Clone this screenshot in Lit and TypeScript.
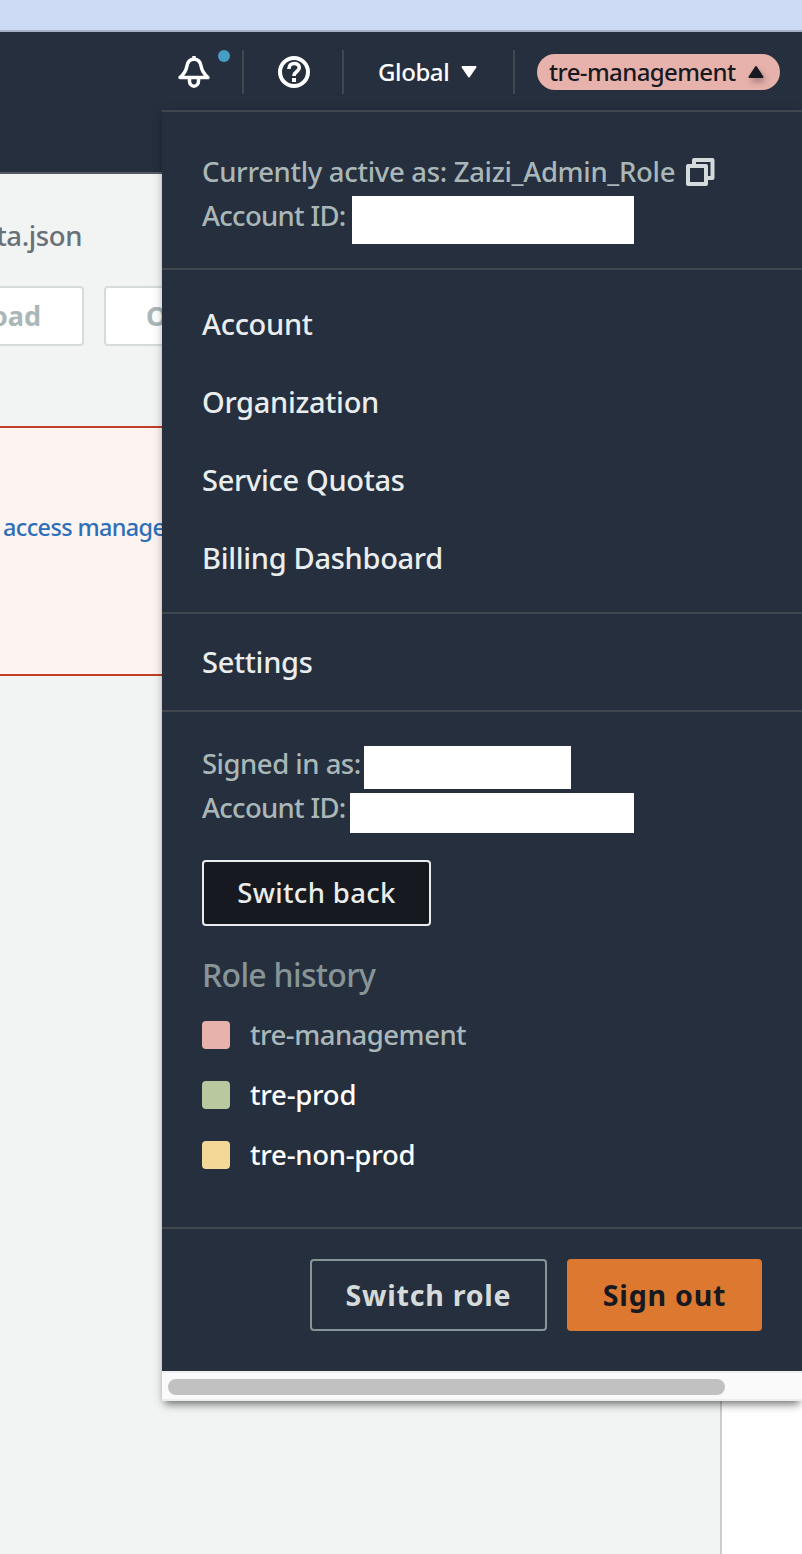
import { LitElement, html, css } from "lit";
import { customElement } from "lit/decorators.js";

@customElement("account-menu")
class AccountMenu extends LitElement {
  static styles = css`
    :host { display: block; box-sizing: border-box; color: #eaeded; }
    * { box-sizing: border-box; }
    .body { background: #252f3e; height: 1261px; border-top: 2px solid #41474f; }
    section { padding-left: 40px; border-bottom: 2px solid #41474f; }
    .active { height: 158px; padding-top: 38px; }
    .links { height: 344px; padding-top: 15px; }
    .settings { height: 98px; padding-top: 9px; }
    .signed { height: 517px; padding-top: 32px; }
    .line { height: 44px; line-height: 44px; font-size: 27.5px; font-weight: 500; letter-spacing: -0.7px; color: #aab7b8; display: flex; align-items: flex-start; white-space: nowrap; }
    .signed .line .label { height: 44px; line-height: 40px; }
    .label { display: block; flex: none; }
    .role { width: 474px; letter-spacing: -0.32px; }
    .l1 { width: 150px; }
    .l2 { width: 162px; letter-spacing: -0.5px; }
    .l3 { width: 148px; }
    .blank { background: #fff; flex: none; }
    .b1 { width: 282px; height: 48px; margin-top: 2px; }
    .b2 { width: 207px; height: 43px; margin-top: 2px; }
    .b3 { width: 284px; height: 40px; margin-top: 5px; }
    .copy { margin: 8px 0 0 10px; display: block; }
    .item { display: block; height: 78px; line-height: 78px; font-size: 29px; letter-spacing: -0.3px; font-weight: 500; }
    .back { width: 229px; height: 66px; margin-top: 28px; border: 2px solid #eaeded; border-radius: 4px; background: #16191f; font-size: 27.5px; letter-spacing: 0.35px; font-weight: 500; display: flex; align-items: center; justify-content: center; padding-bottom: 2px; }
    .heading { margin-top: 24px; height: 50px; line-height: 50px; font-size: 32px; font-weight: 500; letter-spacing: -0.7px; color: #879596; }
    .history { display: flex; align-items: center; height: 60px; gap: 20px; font-size: 27.5px; line-height: 36px; letter-spacing: -0.25px; font-weight: 500; color: #fff; }
    .list { margin-top: 5px; }
    .current { color: #aab7b8; letter-spacing: -0.52px; }
    .swatch { width: 28px; height: 28px; border-radius: 4px; }
    .pink { background: #e8b2ac; }
    .green { background: #bac8a0; }
    .yellow { background: #f4d898; }
    footer { display: flex; justify-content: flex-end; gap: 20px; padding: 30px 40px 0 0; }
    .btn { height: 72px; border-radius: 4px; display: flex; align-items: center; justify-content: center; padding-bottom: 2px; font-size: 28.6px; font-weight: 700; letter-spacing: 0.75px; }
    .outline { width: 237px; border: 2px solid #879596; color: #d5dbdb; }
    .primary { width: 195px; background: #dd7831; color: #16191f; }
    .track { height: 30px; background: #fafafa; border-top: 2px solid #f0f0f0; border-bottom: 2px solid #ededed; padding: 6px 0 0 6px; }
    .thumb { width: 557px; height: 16px; border-radius: 8px; background: #c1c1c1; }
  `;
  render() {
    return html`
      <div class="body">
        <section class="active">
          <div class="line"><span class="label role">Currently active as: Zaizi_Admin_Role</span>
            <svg class="copy" width="29" height="29" viewBox="0 0 29 29" fill="none" stroke="#d5dbdb" stroke-width="4" stroke-linejoin="round"><path d="M8 6V2H26.5V20H22"/><path d="M2 8H20V26H2Z"/></svg>
          </div>
          <div class="line"><span class="label l1">Account ID:</span><span class="blank b1"></span></div>
        </section>
        <section class="links">
          ${["Account", "Organization", "Service Quotas", "Billing Dashboard"].map((t) => html`<a class="item">${t}</a>`)}
        </section>
        <section class="settings"><a class="item">Settings</a></section>
        <section class="signed">
          <div class="line"><span class="label l2">Signed in as:</span><span class="blank b2"></span></div>
          <div class="line"><span class="label l3">Account ID:</span><span class="blank b3"></span></div>
          <div class="back">Switch back</div>
          <div class="heading">Role history</div>
          <div class="list">
            <div class="history current"><span class="swatch pink"></span><span>tre-management</span></div>
            <div class="history"><span class="swatch green"></span><span>tre-prod</span></div>
            <div class="history"><span class="swatch yellow"></span><span>tre-non-prod</span></div>
          </div>
        </section>
        <footer><div class="btn outline">Switch role</div><div class="btn primary">Sign out</div></footer>
      </div>
      <div class="track"><div class="thumb"></div></div>
    `;
  }
}

@customElement("app-root")
class AppRoot extends LitElement {
  static styles = css`
    :host { display: block; position: relative; width: 802px; height: 1554px; overflow: hidden; background: #f2f3f3; font-family: "Noto Sans", "Open Sans", sans-serif; }
    * { box-sizing: border-box; }
    .chrome { height: 32px; background: #cddbf5; border-bottom: 2px solid #a5b0c5; }
    header { height: 142px; background: #252f3e; border-bottom: 2px solid #545b64; display: flex; align-items: flex-start; padding: 18px 22px 0 0; justify-content: flex-end; color: #fff; font-size: 24px; line-height: 34px; letter-spacing: -0.6px; font-weight: 500; }
    .cell { height: 44px; display: flex; align-items: center; border-right: 2px solid #41474f; }
    .bell { width: 68px; align-items: flex-start; }
    .help { width: 100px; justify-content: center; padding-left: 2px; }
    .region { width: 171px; padding-left: 34px; gap: 11px; letter-spacing: -0.4px; }
    .pill { width: 243px; height: 36px; margin: 4px 0 0 22px; border-radius: 18px; background: #e8b2ac; color: #16191f; display: flex; align-items: center; padding-left: 12px; gap: 11px; }
    .tri { filter: drop-shadow(2px 4px 3px rgba(0, 0, 0, 0.3)); }
    .file { height: 112px; padding-top: 40px; font-size: 27.5px; line-height: 44px; letter-spacing: -0.4px; color: #687078; font-weight: 500; width: 82px; display: flex; justify-content: flex-end; }
    .buttons { display: flex; gap: 20px; margin-left: -100px; }
    .button { width: 184px; height: 60px; border: 2px solid #d5dbdb; border-radius: 4px; background: #fff; color: #aab7b8; font-weight: 700; font-size: 27px; display: flex; align-items: center; padding: 0 41px 2px 0; justify-content: flex-end; }
    .open { justify-content: flex-start; padding: 0 0 2px 40px; }
    .alert { margin-top: 80px; height: 250px; background: #fdf3f1; border-top: 2px solid #c03f26; border-bottom: 2px solid #c03f26; padding: 81px 0 0 3px; color: #2b6fb8; font-size: 23.4px; line-height: 36px; letter-spacing: -0.6px; white-space: nowrap; font-weight: 500; }
    .lower { height: 878px; display: flex; justify-content: flex-end; }
    .side { width: 82px; background: #fff; border-left: 2px solid #c9cccf; }
    .menu { position: absolute; left: 162px; top: 110px; width: 640px; box-shadow: 0 2px 12px rgba(0, 0, 0, 0.1), 0 6px 8px -3px rgba(0, 0, 0, 0.5); }
  `;
  render() {
    return html`
      <div class="chrome"></div>
      <header>
        <div class="cell bell">
          <svg width="56" height="44" viewBox="0 0 56 44" fill="none" stroke="#fff" stroke-width="3.5"><path d="M4 27.5C8 24 10 21.5 10.8 16.5C11.5 11.5 13.5 9.2 18 9.2S24.5 11.5 25.2 16.5C26 21.5 28 24 32 27.5Z" stroke-linejoin="round"/><path d="M18 6V9M13.5 28V31A4.5 5.2 0 0 0 22.5 31V28"/><circle cx="48" cy="6" r="6" fill="#479dc6" stroke="none"/></svg>
        </div>
        <div class="cell help">
          <svg width="32" height="32" viewBox="0 0 32 32" fill="none" stroke="#fff" stroke-width="4"><circle cx="16" cy="16" r="14"/><path d="M11 13V12.3C11 6 21.3 6 21.3 11.8C21.3 15.5 16 15.5 16 20" stroke-width="3.6"/><path d="M16 22V26"/></svg>
        </div>
        <div class="cell region"><span>Global</span><svg width="18" height="14" viewBox="0 0 18 14"><path d="M2.5 2H15.5L9 11.5Z" fill="#fff" stroke="#fff" stroke-width="2" stroke-linejoin="round"/></svg></div>
        <div class="pill"><span>tre-management</span><svg class="tri" width="18" height="14" viewBox="0 0 18 14"><path d="M2.5 12H15.5L9 2Z" fill="#16191f" stroke="#16191f" stroke-width="2" stroke-linejoin="round"/></svg></div>
      </header>
      <div class="file">ta.json</div>
      <div class="buttons"><div class="button">oad</div><div class="button open">O</div></div>
      <div class="alert">access manage</div>
      <div class="lower"><div class="side"></div></div>
      <account-menu class="menu"></account-menu>
    `;
  }
}
